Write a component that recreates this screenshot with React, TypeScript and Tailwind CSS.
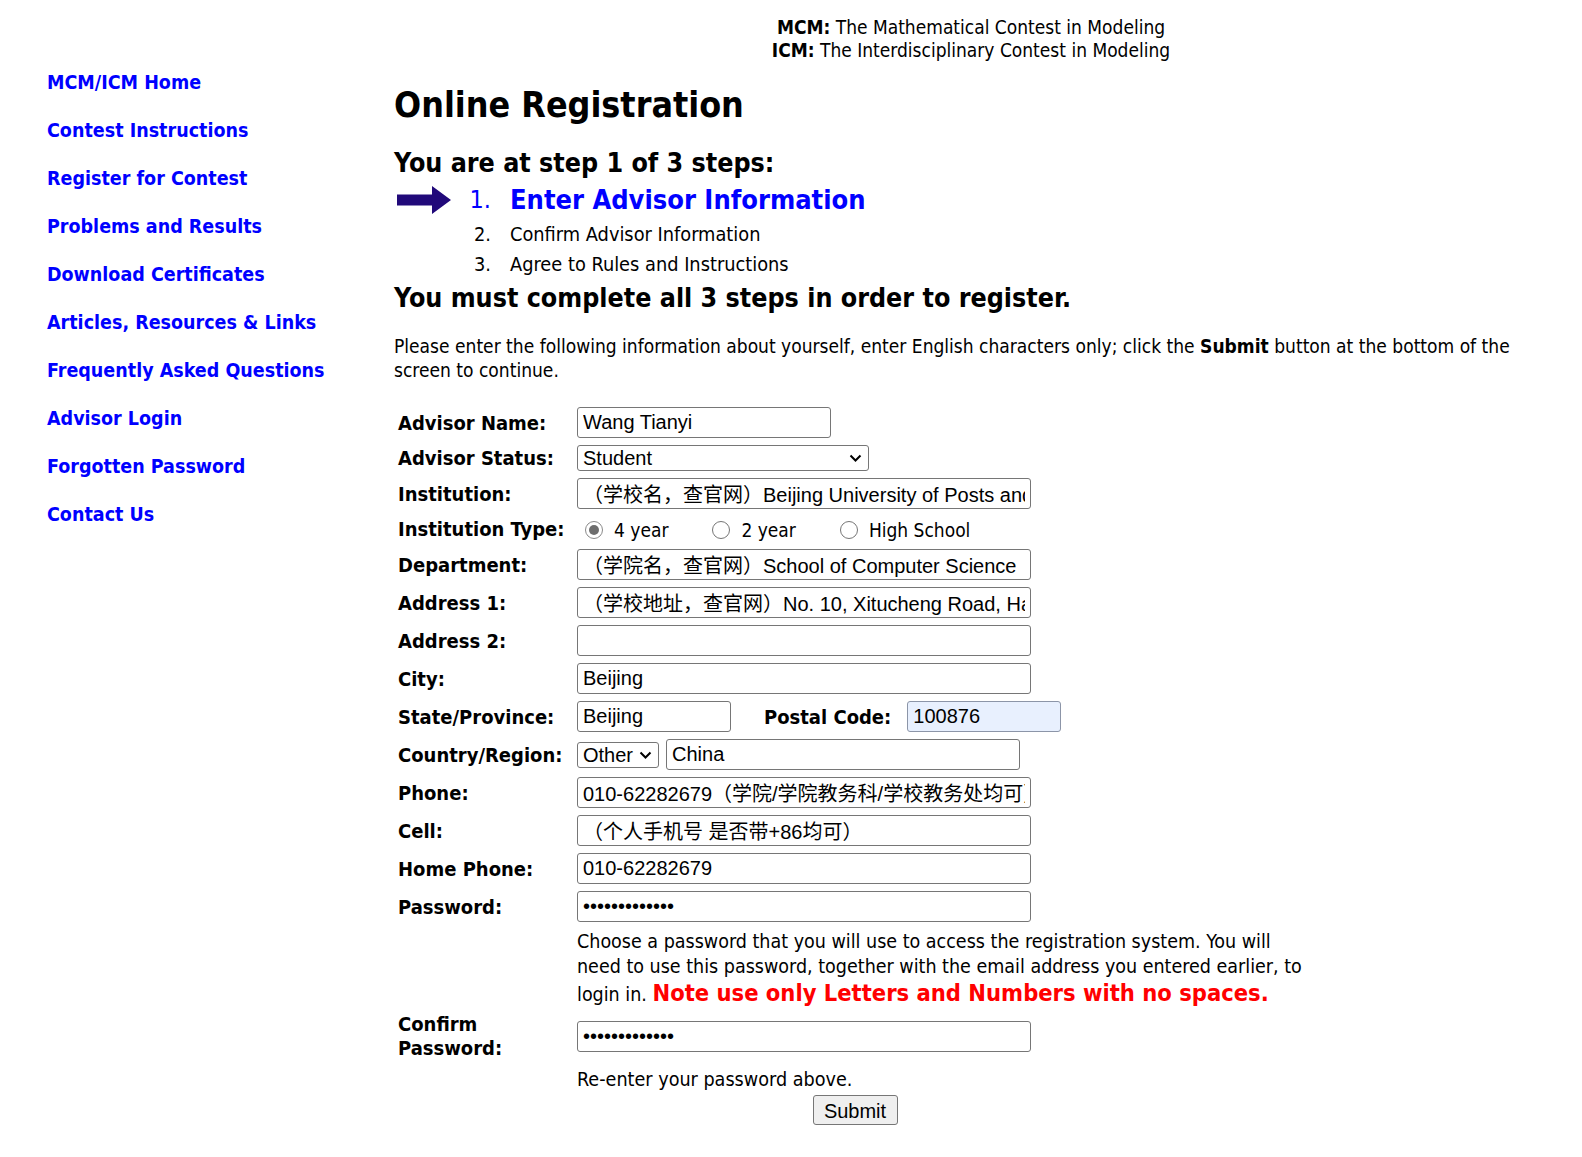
import React from "react";

const sans = "font-['DejaVu_Sans_Condensed','DejaVu_Sans',sans-serif]";
const ctl = "font-['Liberation_Sans','Noto_Sans_CJK_SC',sans-serif]";

const links = [
  "MCM/ICM Home",
  "Contest Instructions",
  "Register for Contest",
  "Problems and Results",
  "Download Certificates",
  "Articles, Resources & Links",
  "Frequently Asked Questions",
  "Advisor Login",
  "Forgotten Password",
  "Contact Us",
];

function Arrow() {
  return (
    <svg width="54" height="28" viewBox="0 0 54 28" className="ml-[3px]">
      <path d="M0 8.5H35V0L54 14L35 28V19.5H0Z" fill="#21097a" />
    </svg>
  );
}

function Field({
  value = "",
  w = "w-[454px]",
  type = "text",
  tint = false,
}: {
  value?: string;
  w?: string;
  type?: string;
  tint?: boolean;
}) {
  return (
    <input
      type={type}
      readOnly
      defaultValue={value}
      className={`h-[31px] ${w} rounded-[3px] border px-[5px] text-[20px] text-black outline-none ${ctl} ${
        tint ? "border-[#8c95a8] bg-[#e8f0fe]" : "border-[#767676] bg-white"
      }`}
    />
  );
}

function Select({ value, w }: { value: string; w: string }) {
  return (
    <div
      className={`flex h-[26px] ${w} items-center justify-between rounded-[3px] border border-[#767676] bg-white pl-[5px] pr-[6px] text-[20px] text-black ${ctl}`}
    >
      <span>{value}</span>
      <svg width="13" height="8" viewBox="0 0 13 8">
        <path d="M1.5 1.5l5 5 5-5" fill="none" stroke="#000" strokeWidth="2" />
      </svg>
    </div>
  );
}

function Radio({ checked = false, label }: { checked?: boolean; label: string }) {
  return (
    <div className="mr-[44px] flex items-center">
      <span
        className={`flex h-[18px] w-[18px] items-center justify-center rounded-full border bg-white ${
          checked ? "border-[#8a8a8a]" : "border-[#767676]"
        }`}
      >
        {checked && <span className="h-[10px] w-[10px] rounded-full bg-[#6d6d6d]" />}
      </span>
      <span className="ml-[11px] text-[19px]">{label}</span>
    </div>
  );
}

function Row({
  label,
  children,
  className = "",
}: {
  label: React.ReactNode;
  children: React.ReactNode;
  className?: string;
}) {
  return (
    <div className={`flex items-center ${className}`}>
      <div className="w-[179px] shrink-0 text-[20px] font-bold leading-[24px]">{label}</div>
      <div className="flex items-center">{children}</div>
    </div>
  );
}

export default function App() {
  return (
    <div className={`flex min-h-screen bg-white text-black ${sans}`}>
      <nav className="flex w-[394px] shrink-0 flex-col gap-[24px] pl-[47px] pt-[71px]">
        {links.map((l) => (
          <a key={l} href="#" className="text-[19.5px] font-bold leading-[24px] text-[#0000ff]">
            {l}
          </a>
        ))}
      </nav>

      <main className="w-[1154px] shrink-0 pb-[30px]">
        <div className="pt-[16px] text-center text-[19px] leading-[23px]">
          <div>
            <b>MCM:</b> The Mathematical Contest in Modeling
          </div>
          <div>
            <b>ICM:</b> The Interdisciplinary Contest in Modeling
          </div>
        </div>

        <h1 className="mt-[21px] text-[35.5px] font-bold leading-[44px]">Online Registration</h1>

        <h3 className="mt-[21px] text-[26.6px] font-bold leading-[30px]">You are at step 1 of 3 steps:</h3>

        <div className="mt-[5px] flex h-[34px] items-center">
          <div className="flex w-[116px] shrink-0 items-center justify-between pr-[19px]">
            <Arrow />
            <span className="text-[25px] text-[#0000ff]">1.</span>
          </div>
          <span className="text-[27px] font-bold text-[#0000ff]">Enter Advisor Information</span>
        </div>
        <div className="mt-[3px] flex h-[30px] items-center text-[19.8px]">
          <span className="w-[116px] shrink-0 pr-[19px] text-right">2.</span>
          <span>Confirm Advisor Information</span>
        </div>
        <div className="flex h-[30px] items-center text-[19.8px]">
          <span className="w-[116px] shrink-0 pr-[19px] text-right">3.</span>
          <span>Agree to Rules and Instructions</span>
        </div>

        <h3 className="mt-[3px] text-[26.6px] font-bold leading-[30px]">
          You must complete all 3 steps in order to register.
        </h3>

        <p className="mt-[21px] w-[1125px] text-[19.05px] leading-[24px]">
          Please enter the following information about yourself, enter English characters only; click the{" "}
          <b>Submit</b> button at the bottom of the screen to continue.
        </p>

        <form className="mt-[25px] flex w-[913px] flex-col gap-[7px] pl-[4px]">
          <Row label="Advisor Name:">
            <Field value="Wang Tianyi" w="w-[254px]" />
          </Row>
          <Row label="Advisor Status:">
            <Select value="Student" w="w-[292px]" />
          </Row>
          <Row label="Institution:">
            <Field value="（学校名，查官网）Beijing University of Posts and Telecommunications" />
          </Row>
          <Row label="Institution Type:">
            <div className="flex h-[26px] items-center pl-[8px] pt-[2px]">
              <Radio checked label="4 year" />
              <Radio label="2 year" />
              <Radio label="High School" />
            </div>
          </Row>
          <Row label="Department:">
            <Field value="（学院名，查官网）School of Computer Science" />
          </Row>
          <Row label="Address 1:">
            <Field value="（学校地址，查官网）No. 10, Xitucheng Road, Haidian District, Beijing" />
          </Row>
          <Row label="Address 2:">
            <Field />
          </Row>
          <Row label="City:">
            <Field value="Beijing" />
          </Row>
          <Row label="State/Province:">
            <Field value="Beijing" w="w-[154px]" />
            <span className="ml-[33px] mr-[16px] text-[20px] font-bold">Postal Code:</span>
            <Field value="100876" w="w-[154px]" tint />
          </Row>
          <Row label="Country/Region:">
            <Select value="Other" w="w-[82px]" />
            <div className="ml-[7px]">
              <Field value="China" w="w-[354px]" />
            </div>
          </Row>
          <Row label="Phone:">
            <Field value="010-62282679（学院/学院教务科/学校教务处均可）" />
          </Row>
          <Row label="Cell:">
            <Field value="（个人手机号 是否带+86均可）" />
          </Row>
          <Row label="Home Phone:">
            <Field value="010-62282679" />
          </Row>
          <Row label="Password:">
            <Field value="abcdefghijklm" type="password" />
          </Row>

          <div className="flex">
            <div className="w-[179px] shrink-0" />
            <p className="w-[742px] text-[19.5px] leading-[25px]">
              Choose a password that you will use to access the registration system. You will need to use this
              password, together with the email address you entered earlier, to login in.{" "}
              <span className="text-[23.5px] font-bold leading-[29px] text-[#ff0000]">
                Note use only Letters and Numbers with no spaces.
              </span>
            </p>
          </div>

          <Row
            className="-mt-[3px]"
            label={
              <>
                Confirm
                <br />
                Password:
              </>
            }
          >
            <Field value="abcdefghijklm" type="password" />
          </Row>

          <div className="mt-[1px] flex">
            <div className="w-[179px] shrink-0" />
            <p className="text-[19.6px] leading-[24px]">Re-enter your password above.</p>
          </div>

          <div className="-mt-[4px] flex justify-center">
            <button
              type="button"
              className={`ml-[5px] h-[30px] w-[85px] rounded-[3px] border border-[#767676] bg-[#efefef] text-[20px] text-black ${ctl}`}
            >
              Submit
            </button>
          </div>
        </form>
      </main>
    </div>
  );
}
